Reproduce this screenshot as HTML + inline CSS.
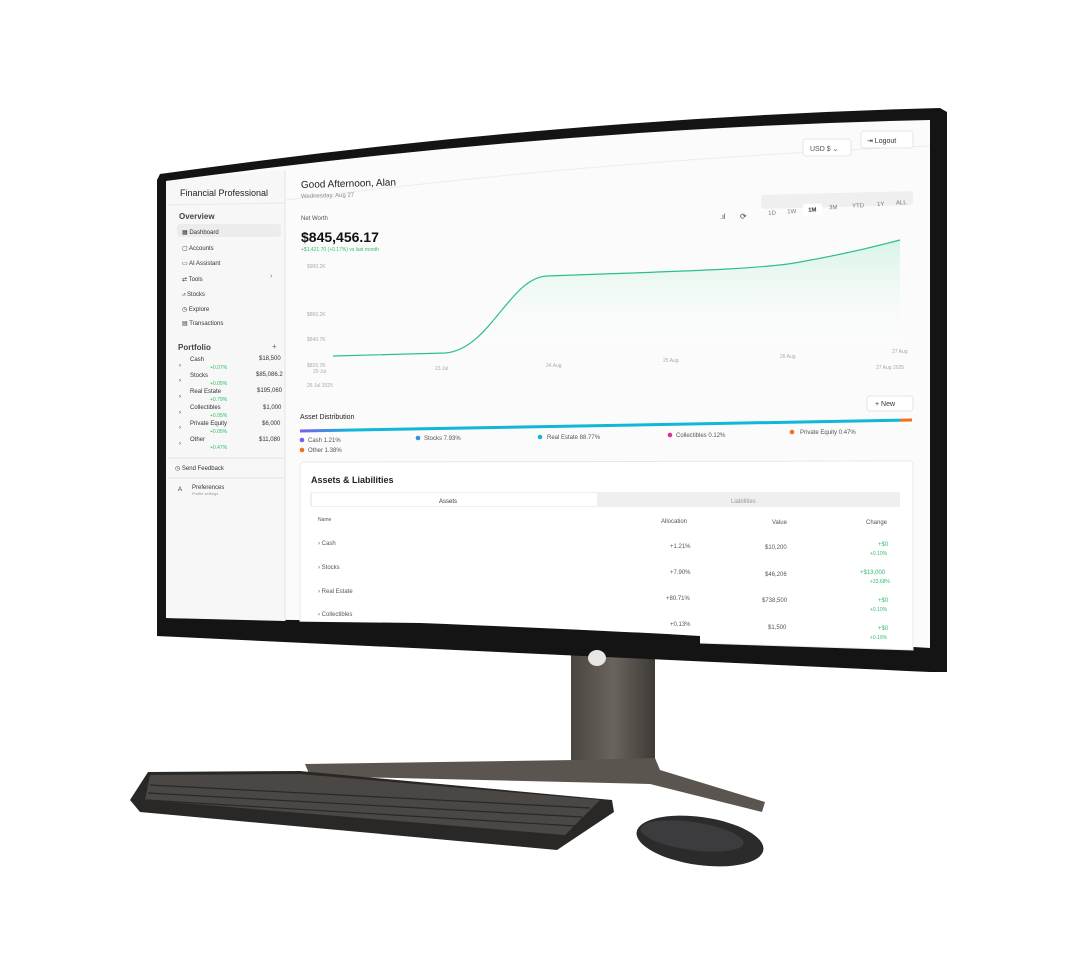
<!DOCTYPE html>
<html><head><meta charset="utf-8"><style>
html,body{margin:0;padding:0;background:#fff;width:1088px;height:960px;overflow:hidden}
svg{display:block}
text{font-family:"Liberation Sans",sans-serif}
</style></head><body>
<svg width="1088" height="960" viewBox="0 0 1088 960" xmlns="http://www.w3.org/2000/svg">
<defs>
<linearGradient id="g" x1="0" y1="0" x2="0" y2="1"><stop offset="0" stop-color="#d8f3e6"/><stop offset="1" stop-color="#ffffff" stop-opacity="0"/></linearGradient>
<linearGradient id="st" x1="0" y1="0" x2="1" y2="0"><stop offset="0" stop-color="#4a4540"/><stop offset=".5" stop-color="#6a645d"/><stop offset="1" stop-color="#3e3a36"/></linearGradient>
<linearGradient id="bar" x1="0" y1="0" x2="1" y2="0"><stop offset="0" stop-color="#7b5cf0"/><stop offset=".08" stop-color="#12b6d6"/><stop offset=".98" stop-color="#12b6d6"/><stop offset=".98" stop-color="#f07020"/></linearGradient>
</defs>
<!-- stand -->
<rect x="571" y="648" width="84" height="116" fill="url(#st)"/>
<path d="M305 764 L575 760 L655 758 L660 770 L765 802 L762 812 L650 784 L310 776 Z" fill="#5b5550"/>
<!-- keyboard -->
<path d="M148 772 L300 771 L612 800 L614 812 L557 850 L140 812 L130 800 Z" fill="#2a2826"/>
<path d="M150 775 L300 774 L600 800 L565 835 L145 800 Z" fill="#4a4744"/>
<g stroke="#2a2826" stroke-width="1.2">
<path d="M150 785 L590 808 M148 793 L582 817 M146 800 L575 826"/>
</g>
<!-- mouse -->
<ellipse cx="700" cy="841" rx="64" ry="24" fill="#2b2b2c" transform="rotate(8 700 841)"/>
<ellipse cx="692" cy="836" rx="52" ry="14" fill="#3c3c3e" transform="rotate(8 692 836)"/>
<!-- monitor bezel -->
<path d="M160 174 Q560 118 940 108 L947 112 L947 672 L930 672 Q560 655 157 636 L157 180 Z" fill="#141414"/>
<!-- screen -->
<path d="M166 181 Q560 128 930 120 L930 648 Q600 628 420 622 L166 618 Z" fill="#fbfbfb"/>
<!-- sidebar -->
<path d="M166 181 L285 170 L285 621 L166 618 Z" fill="#f7f7f7"/>
<line x1="285" y1="170" x2="285" y2="621" stroke="#e6e6e6"/>
<line x1="168" y1="205" x2="285" y2="203" stroke="#e8e8e8"/>
<path d="M286 200 Q600 160 930 146" stroke="#ececec" fill="none"/>
<g font-size="8" fill="#333">
<text x="180" y="196" font-size="9" fill="#222">Financial Professional</text>
<text x="179" y="219" font-weight="bold" fill="#444">Overview</text>
<rect x="177" y="224" width="104" height="13" rx="3" fill="#ececec"/>
<text x="182" y="234" font-size="6">▦  Dashboard</text>
<text x="182" y="250" font-size="6">▢  Accounts</text>
<text x="182" y="265" font-size="6">▭  AI Assistant</text>
<text x="182" y="281" font-size="6">⇄  Tools</text><text x="270" y="278" font-size="7" fill="#777">›</text>
<text x="182" y="296" font-size="6">⩘  Stocks</text>
<text x="182" y="311" font-size="6">◷  Explore</text>
<text x="182" y="325" font-size="6">▤  Transactions</text>
<text x="178" y="350" font-weight="bold" fill="#444">Portfolio</text><text x="272" y="349" fill="#666">+</text>
<g font-size="6">
<text x="179" y="367">›</text><text x="190" y="361">Cash</text><text x="210" y="369" fill="#2fbf6a" font-size="5">+0.07%</text><text x="259" y="360">$18,500</text>
<text x="179" y="382">›</text><text x="190" y="377">Stocks</text><text x="210" y="385" fill="#2fbf6a" font-size="5">+0.05%</text><text x="256" y="376">$85,086.2</text>
<text x="179" y="398">›</text><text x="190" y="393">Real Estate</text><text x="210" y="401" fill="#2fbf6a" font-size="5">+0.79%</text><text x="257" y="392">$195,060</text>
<text x="179" y="414">›</text><text x="190" y="409">Collectibles</text><text x="210" y="417" fill="#2fbf6a" font-size="5">+0.05%</text><text x="263" y="409">$1,000</text>
<text x="179" y="429">›</text><text x="190" y="425">Private Equity</text><text x="210" y="433" fill="#2fbf6a" font-size="5">+0.05%</text><text x="262" y="425">$6,000</text>
<text x="179" y="445">›</text><text x="190" y="441">Other</text><text x="210" y="449" fill="#2fbf6a" font-size="5">+0.47%</text><text x="259" y="441">$11,080</text>
</g>
<line x1="167" y1="458" x2="285" y2="458" stroke="#e6e6e6"/>
<text x="175" y="470" font-size="6">◷  Send Feedback</text>
<line x1="167" y1="478" x2="285" y2="478" stroke="#e6e6e6"/>
<text x="178" y="491" font-size="6">A</text><text x="192" y="489" font-size="6">Preferences</text><text x="192" y="495" font-size="4" fill="#999">Profile settings</text>
</g>
<!-- main header -->
<text x="301" y="188" font-size="10" fill="#222" transform="rotate(-1.5 301 188)">Good Afternoon, Alan</text>
<text x="301" y="198" font-size="6" fill="#888" transform="rotate(-1.5 301 198)">Wednesday, Aug 27</text>
<rect x="803" y="139" width="48" height="17" rx="3" fill="#fff" stroke="#e4e4e4"/>
<text x="810" y="151" font-size="7" fill="#555">USD $   ⌄</text>
<rect x="861" y="131" width="52" height="17" rx="3" fill="#fff" stroke="#e4e4e4"/>
<text x="867" y="143" font-size="7" fill="#333">⇥   Logout</text>
<!-- net worth -->
<text x="301" y="220" font-size="6" fill="#555">Net Worth</text>
<text x="301" y="242" font-size="14" font-weight="bold" fill="#111">$845,456.17</text>
<text x="301" y="251" font-size="5" fill="#2fbf6a">+$1,421.70 (+0.17%) vs last month</text>
<text x="720" y="219" font-size="7" fill="#444">.ıl</text>
<text x="740" y="219" font-size="8" fill="#444">⟳</text>
<rect x="761" y="195" width="152" height="14" rx="3" fill="#efefef" transform="rotate(-1.5 761 195)"/>
<rect x="803" y="204" width="19" height="11" rx="2" fill="#fff" transform="rotate(-1.5 803 204)"/>
<g font-size="6" fill="#777" transform="rotate(-1.5 761 205)">
<text x="768" y="215">1D</text><text x="787" y="214">1W</text><text x="808" y="213" font-weight="bold" fill="#333">1M</text><text x="829" y="211">3M</text><text x="852" y="210">YTD</text><text x="877" y="209">1Y</text><text x="896" y="208">ALL</text>
</g>
<!-- chart -->
<path d="M333 356 L445 353 C490 350 510 276 548 276 C650 272 760 270 800 262 C840 255 870 248 900 240 L900 352 L333 356 Z" fill="url(#g)"/>
<path d="M333 356 L445 353 C490 350 510 276 548 276 C650 272 760 270 800 262 C840 255 870 248 900 240" fill="none" stroke="#2cbf8a" stroke-width="1.2"/>
<g font-size="5" fill="#aaa">
<text x="307" y="268">$900.2K</text><text x="307" y="316">$860.2K</text><text x="307" y="341">$840.7K</text><text x="307" y="367">$820.7K</text>
<text x="313" y="373">20 Jul</text><text x="435" y="370">23 Jul</text><text x="546" y="367">24 Aug</text><text x="663" y="362">25 Aug</text><text x="780" y="358">26 Aug</text><text x="892" y="353">27 Aug</text>
<text x="307" y="387">26 Jul 2025</text><text x="876" y="369">27 Aug 2025</text>
</g>
<!-- distribution -->
<rect x="867" y="396" width="46" height="15" rx="3" fill="#fff" stroke="#e4e4e4"/>
<text x="875" y="406" font-size="7" fill="#333">+   New</text>
<text x="300" y="419" font-size="7" fill="#222">Asset Distribution</text>
<path d="M300 431 L912 420" stroke="url(#bar)" stroke-width="3"/>
<g font-size="6" fill="#555">
<circle cx="302" cy="440" r="2.3" fill="#7b5cf0"/><text x="308" y="442">Cash 1.21%</text>
<circle cx="302" cy="450" r="2.3" fill="#f07020"/><text x="308" y="452">Other 1.38%</text>
<circle cx="418" cy="438" r="2.3" fill="#2f8ef0"/><text x="424" y="440">Stocks 7.93%</text>
<circle cx="540" cy="437" r="2.3" fill="#12b6d6"/><text x="547" y="439">Real Estate 88.77%</text>
<circle cx="670" cy="435" r="2.3" fill="#e62a9e"/><text x="676" y="437">Collectibles 0.12%</text>
<circle cx="792" cy="432" r="2.3" fill="#f07020"/><text x="800" y="434">Private Equity 0.47%</text>
</g>
<!-- assets card -->
<path d="M304 462 L910 461 Q913 461 913 464 L913 650 L300 630 L300 466 Q300 462 304 462 Z" fill="#fff" stroke="#e8e8e8"/>
<text x="311" y="483" font-size="9" font-weight="bold" fill="#222">Assets &amp; Liabilities</text>
<rect x="310" y="492" width="590" height="15" rx="2" fill="#efefef"/>
<rect x="312" y="493" width="285" height="13" rx="2" fill="#fff"/>
<text x="439" y="503" font-size="6" fill="#333">Assets</text>
<text x="731" y="503" font-size="6" fill="#999">Liabilities</text>
<g font-size="6" fill="#555">
<text x="318" y="521" font-size="5">Name</text><text x="661" y="523">Allocation</text><text x="772" y="524">Value</text><text x="866" y="524">Change</text>
<text x="318" y="545">›  Cash</text><text x="670" y="548">+1.21%</text><text x="765" y="549">$10,200</text><text x="878" y="546" fill="#2fbf6a">+$0</text><text x="870" y="555" fill="#2fbf6a" font-size="5">+0.10%</text>
<text x="318" y="569">›  Stocks</text><text x="670" y="574">+7.90%</text><text x="765" y="576">$46,206</text><text x="860" y="574" fill="#2fbf6a">+$13,000</text><text x="870" y="583" fill="#2fbf6a" font-size="5">+33.68%</text>
<text x="318" y="593">›  Real Estate</text><text x="666" y="600">+80.71%</text><text x="762" y="602">$738,500</text><text x="878" y="602" fill="#2fbf6a">+$0</text><text x="870" y="611" fill="#2fbf6a" font-size="5">+0.10%</text>
<text x="318" y="616">›  Collectibles</text><text x="670" y="626">+0.13%</text><text x="768" y="629">$1,500</text><text x="878" y="630" fill="#2fbf6a">+$0</text><text x="870" y="639" fill="#2fbf6a" font-size="5">+0.19%</text>
</g>
<!-- bottom bezel overlapping left part -->
<path d="M157 620 L420 623 Q600 630 700 636 L700 650 Q560 642 157 636 Z" fill="#141414"/>
<ellipse cx="597" cy="658" rx="9" ry="8" fill="#e8e6e3"/>
</svg>
</body></html>
